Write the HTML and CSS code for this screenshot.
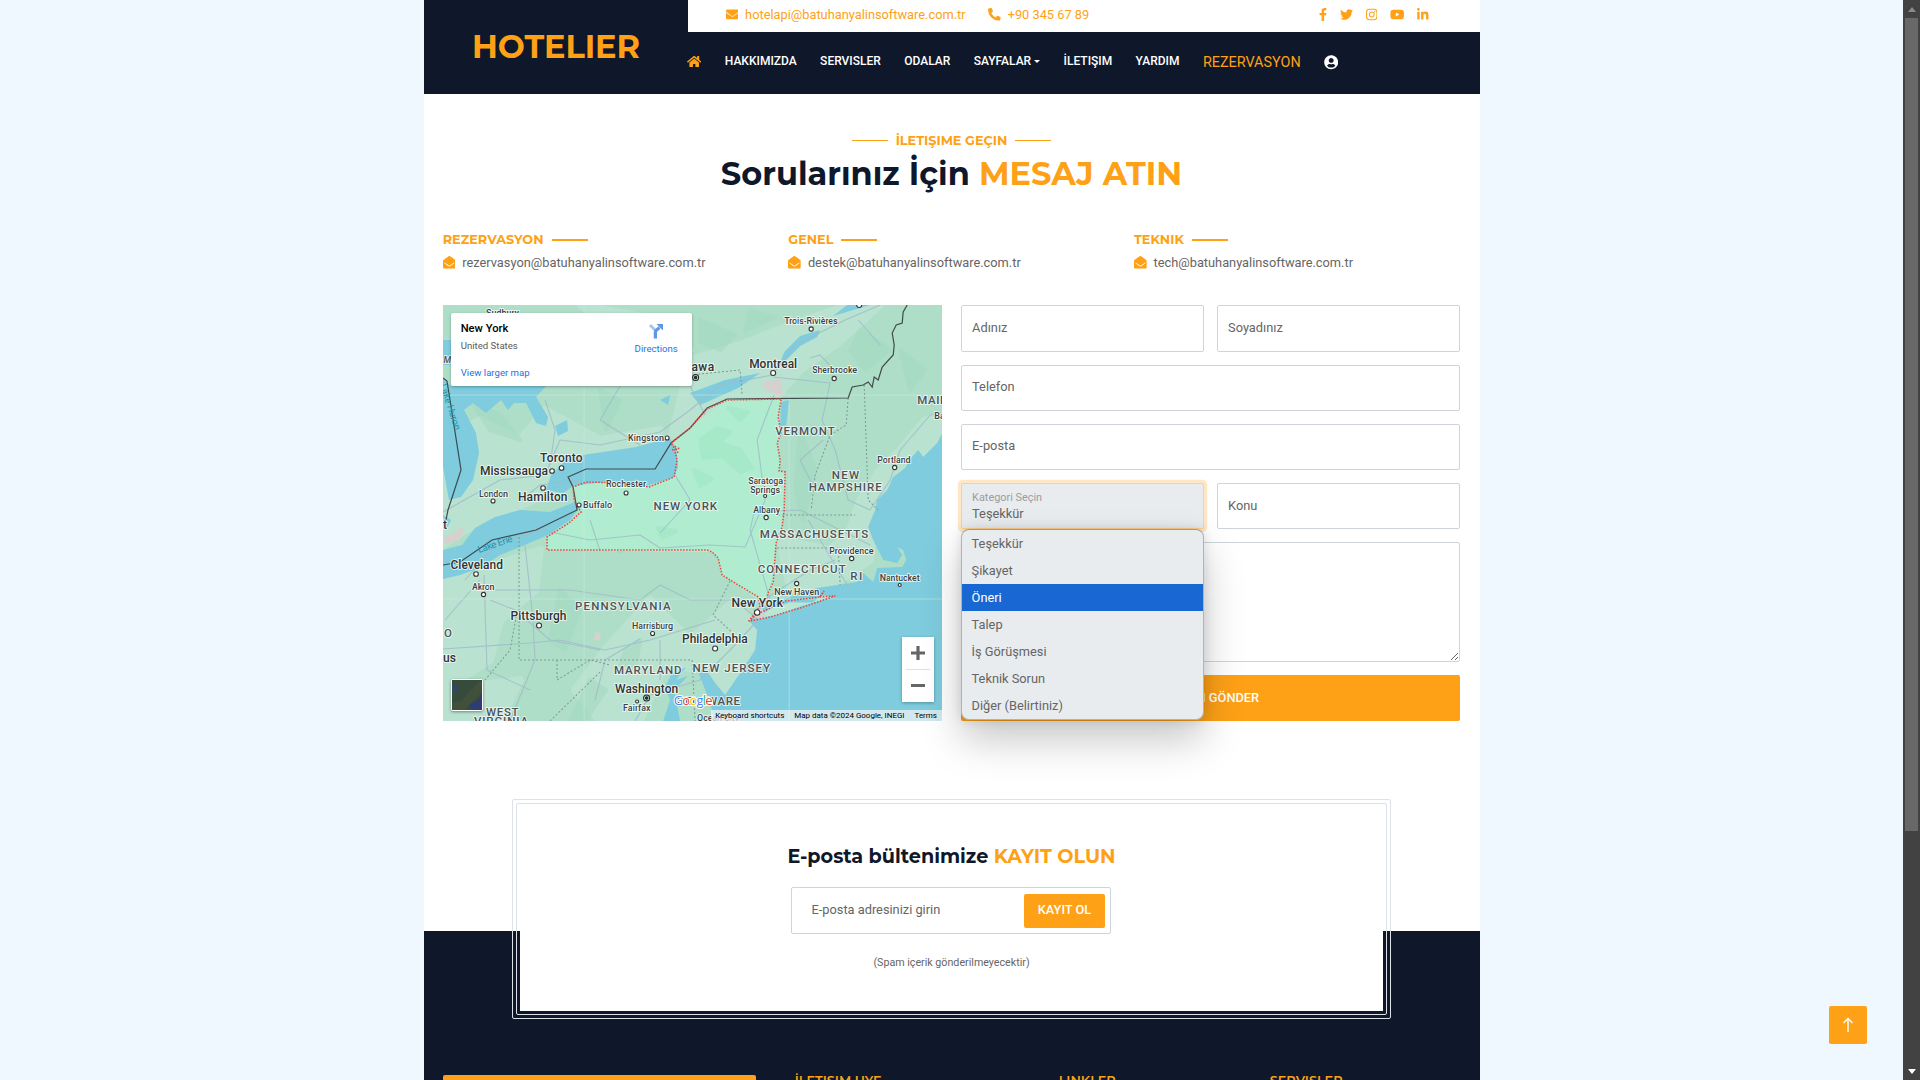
FILE: index.html
```html
<!DOCTYPE html>
<html lang="tr">
<head>
<meta charset="utf-8">
<title>Hotelier - İletişim</title>
<link rel="stylesheet" href="styles.css">
</head>
<body>
<svg class="sprite" width="0" height="0" aria-hidden="true">
  <symbol id="envelope" viewBox="0 0 512 512"><path d="M502.3 190.8c3.9-3.1 9.7-.2 9.7 4.7V400c0 26.5-21.5 48-48 48H48c-26.5 0-48-21.5-48-48V195.6c0-5 5.7-7.8 9.7-4.7 22.4 17.4 52.1 39.5 154.1 113.6 21.1 15.4 56.7 47.8 92.2 47.6 35.7.3 72-32.8 92.3-47.6 102-74.1 131.6-96.3 154-113.7zM256 320c23.2.4 56.6-29.2 73.4-41.4 132.7-96.3 142.8-104.7 173.4-128.7 5.8-4.5 9.2-11.5 9.2-18.9v-19c0-26.5-21.5-48-48-48H48c-26.5 0-48 21.5-48 48v19c0 7.4 3.4 14.3 9.2 18.9 30.6 23.9 40.7 32.4 173.4 128.7 16.8 12.2 50.2 41.8 73.4 41.4z"/></symbol>
  <symbol id="phone" viewBox="0 0 512 512"><path d="M497.39 361.8l-112-48a24 24 0 0 0-28 6.9l-49.6 60.6A370.66 370.66 0 0 1 130.6 204.11l60.6-49.6a23.94 23.94 0 0 0 6.9-28l-48-112A24.16 24.16 0 0 0 122.6.61l-104 24A24 24 0 0 0 0 48c0 256.5 207.9 464 464 464a24 24 0 0 0 23.4-18.6l24-104a24.29 24.29 0 0 0-14.01-27.6z"/></symbol>
  <symbol id="open" viewBox="0 0 512 512"><path d="M512 464c0 26.51-21.49 48-48 48H48c-26.51 0-48-21.49-48-48V200.724a48 48 0 0 1 18.387-37.776c24.913-19.529 45.501-35.365 164.2-121.511C199.412 29.17 232.797-.347 256 .003c23.198-.354 56.596 29.172 73.413 41.433 118.687 86.137 139.303 101.995 164.2 121.512A48 48 0 0 1 512 200.724V464zm-65.666-196.605c-2.563-3.728-7.7-4.595-11.339-1.907-22.845 16.873-55.462 40.705-105.582 77.079-16.825 12.266-50.21 41.781-73.413 41.43-23.211.344-56.559-29.143-73.413-41.43-50.114-36.37-82.734-60.204-105.582-77.079-3.639-2.688-8.776-1.821-11.339 1.907l-9.072 13.196a7.998 7.998 0 0 0 1.839 10.967c22.887 16.899 55.454 40.69 105.303 76.868 20.274 14.781 56.524 47.813 92.264 47.573 35.724.242 71.961-32.771 92.263-47.573 49.85-36.179 82.418-59.97 105.303-76.868a7.998 7.998 0 0 0 1.839-10.967l-9.071-13.196z"/></symbol>
</svg>
<div class="window">
<div class="viewport">
<div class="page">
  <header class="header">
    <div class="brand">HOTELIER</div>
    <div class="head-right">
      <div class="topbar">
        <div class="contact-line">
          <span class="with-icon"><svg class="ico"><use href="#envelope"/></svg><span class="mail">hotelapi@batuhanyalinsoftware.com.tr</span></span>
          <span class="with-icon"><svg class="ico"><use href="#phone"/></svg>+90 345 67 89</span>
        </div>
        <div class="social">
          <svg width="8" height="13" viewBox="0 0 320 512"><path d="M279.14 288l14.22-92.66h-88.91v-60.13c0-25.35 12.42-50.06 52.24-50.06h40.42V6.26S260.43 0 225.36 0c-73.22 0-121.08 44.38-121.08 124.72v70.62H22.89V288h81.39v224h100.17V288z"/></svg>
          <svg width="13" height="13" viewBox="0 0 512 512"><path d="M459.37 151.716c.325 4.548.325 9.097.325 13.645 0 138.72-105.583 298.558-298.558 298.558-59.452 0-114.68-17.219-161.137-47.106 8.447.974 16.568 1.299 25.34 1.299 49.055 0 94.213-16.568 130.274-44.832-46.132-.975-84.792-31.188-98.112-72.772 6.498.974 12.995 1.624 19.818 1.624 9.421 0 18.843-1.3 27.614-3.573-48.081-9.747-84.143-51.98-84.143-102.985v-1.299c13.969 7.797 30.214 12.67 47.431 13.319-28.264-18.843-46.781-51.005-46.781-87.391 0-19.492 5.197-37.36 14.294-52.954 51.655 63.675 129.3 105.258 216.365 109.807-1.624-7.797-2.599-15.918-2.599-24.04 0-57.828 46.782-104.934 104.934-104.934 30.213 0 57.502 12.67 76.67 33.137 23.715-4.548 46.456-13.32 66.599-25.34-7.798 24.366-24.366 44.833-46.132 57.827 21.117-2.273 41.584-8.122 60.426-16.243-14.292 20.791-32.161 39.308-52.628 54.253z"/></svg>
          <svg width="11.5" height="13" viewBox="0 0 448 512"><path fill-rule="evenodd" d="M132 32h184a132 132 0 0 1 132 132v184a132 132 0 0 1-132 132H132A132 132 0 0 1 0 348V164A132 132 0 0 1 132 32zm0 40a92 92 0 0 0-92 92v184a92 92 0 0 0 92 92h184a92 92 0 0 0 92-92V164a92 92 0 0 0-92-92zm92 69a115 115 0 1 1 0 230 115 115 0 0 1 0-230zm0 40a75 75 0 1 0 0 150 75 75 0 0 0 0-150zm119-72a27 27 0 1 1 0 54 27 27 0 0 1 0-54z"/></svg>
          <svg width="14.4" height="13" viewBox="0 0 576 512"><path d="M549.655 124.083c-6.281-23.65-24.787-42.276-48.284-48.597C458.781 64 288 64 288 64S117.22 64 74.629 75.486c-23.497 6.322-42.003 24.947-48.284 48.597-11.412 42.867-11.412 132.305-11.412 132.305s0 89.438 11.412 132.305c6.281 23.65 24.787 41.5 48.284 47.821C117.22 448 288 448 288 448s170.78 0 213.371-11.486c23.497-6.321 42.003-24.171 48.284-47.821 11.412-42.867 11.412-132.305 11.412-132.305s0-89.438-11.412-132.305zm-317.51 213.508V175.185l142.739 81.205-142.739 81.201z"/></svg>
          <svg width="11.5" height="13" viewBox="0 0 448 512"><path d="M100.28 448H7.4V148.9h92.88zM53.79 108.1C24.09 108.1 0 83.5 0 53.8a53.79 53.79 0 0 1 107.58 0c0 29.7-24.1 54.3-53.79 54.3zM447.9 448h-92.68V302.4c0-34.7-.7-79.2-48.29-79.2-48.29 0-55.69 37.7-55.69 76.7V448h-92.78V148.9h89.08v40.8h1.3c12.4-23.5 42.69-48.3 87.88-48.3 94 0 111.28 61.9 111.28 142.3V448z"/></svg>
        </div>
      </div>
      <nav class="nav">
        <svg class="home" width="14.4" height="13" viewBox="0 0 576 512"><path d="M280.37 148.26L96 300.11V464a16 16 0 0 0 16 16l112.06-.29a16 16 0 0 0 15.92-16V368a16 16 0 0 1 16-16h64a16 16 0 0 1 16 16v95.64a16 16 0 0 0 16 16.05L464 480a16 16 0 0 0 16-16V300L295.67 148.26a12.19 12.19 0 0 0-15.3 0zM571.6 251.47L488 182.56V44.05a12 12 0 0 0-12-12h-56a12 12 0 0 0-12 12v72.61L318.47 43a48 48 0 0 0-61 0L4.34 251.47a12 12 0 0 0-1.6 16.9l25.5 31A12 12 0 0 0 45.15 301l235.22-193.74a12.19 12.19 0 0 1 15.3 0L530.9 301a12 12 0 0 0 16.9-1.6l25.5-31a12 12 0 0 0-1.7-16.93z"/></svg>
        <a>HAKKIMIZDA</a><a>SERVISLER</a><a>ODALAR</a><a class="drop">SAYFALAR</a><a>İLETIŞIM</a><a>YARDIM</a><a class="reserve">REZERVASYON</a>
        <svg class="user" width="14.4" height="14.4" viewBox="0 0 496 512"><path d="M248 8C111 8 0 119 0 256s111 248 248 248 248-111 248-248S385 8 248 8zm0 96c48.6 0 88 39.4 88 88s-39.4 88-88 88-88-39.4-88-88 39.4-88 88-88zm0 344c-58.7 0-111.3-26.6-146.5-68.2 18.8-35.4 55.6-59.8 98.5-59.8 2.4 0 4.8.4 7.1 1.1 13 4.2 26.6 6.9 40.9 6.9 14.3 0 28-2.7 40.9-6.9 2.3-.7 4.7-1.1 7.1-1.1 42.9 0 79.7 24.4 98.5 59.8C359.3 421.4 306.7 448 248 448z"/></svg>
      </nav>
    </div>
  </header>

  <main class="main">
    <div class="overline"><i></i><span>İLETIŞIME GEÇIN</span><i></i></div>
    <h1 class="title">Sorularınız İçin <b>MESAJ ATIN</b></h1>

    <div class="contacts">
      <div><h6><span>REZERVASYON</span></h6><p><svg class="ico"><use href="#open"/></svg>rezervasyon@batuhanyalinsoftware.com.tr</p></div>
      <div><h6><span>GENEL</span></h6><p><svg class="ico"><use href="#open"/></svg>destek@batuhanyalinsoftware.com.tr</p></div>
      <div><h6><span>TEKNIK</span></h6><p><svg class="ico"><use href="#open"/></svg>tech@batuhanyalinsoftware.com.tr</p></div>
    </div>

    <div class="columns">
      <div class="map">
        <svg class="map-art" viewBox="443 305 499 416" preserveAspectRatio="none">
          <rect x="443" y="305" width="499" height="416" fill="#aedec8"/>
          <g class="light">
            <path d="M443 440L480 420 520 440 545 410 600 440 660 430 640 450 570 455 548 475 545 495 510 510 465 530 443 545z"/>
            <path d="M443 580L480 570 540 550 535 590 500 620 490 660 443 690z"/>
            <path d="M690 360L740 345 790 325 850 305 880 305 835 345 800 370 775 398 725 400 690 430 672 435z"/>
            <path d="M605 650L650 600 690 640 735 600 757 625 750 665 725 692 705 670 665 665 640 721 600 721 575 690z"/>
            <path d="M443 690L520 680 500 721H443zM580 305L640 340 690 350 660 320z"/>
            <path d="M860 500L880 470 900 450 925 420 942 415V440L900 470 875 510 870 560 840 580 790 590 780 540 830 550 850 530z"/>
          </g>
          <g class="dark">
            <path d="M470 400L490 430 520 440 500 415zM600 320L640 350 610 365zM700 320L735 335 720 350 700 342zM750 310L775 318 745 330zM800 430L815 470 803 520 795 490zM860 330L890 350 865 370 850 350zM600 390L620 400 606 430z"/>
            <path d="M600 530L640 540 620 552zM560 590L580 610 565 650 550 640zM625 650L640 640 636 665 620 665zM590 680L570 721H585L606 690zM690 540L710 520 705 545zM900 350L925 370 910 390z"/>
          </g>
          <path fill="#b0edd0" d="M690 428L727 399H781L778 417 781 433 777 443 780 460 779 471 785 472 784 510 782 527 776 543 773 582 768 597 758 600 730 580 722 575 718 558 712 552 547 550V537L569 523 581 512 574 500 573 487 586 482 623 483 649 487 674 477 677 460 671 443z"/>
          <path class="hills" d="M700 440L716 428 730 432 720 443 740 450 752 468 740 472 722 456 703 458zM728 408L748 412 740 420zM694 470L712 479 700 486zM658 528L676 531 662 538z"/>
          <g fill="#7eccde">
            <path d="M942 433L937 443 923 457 918 450 910 459 905 468 893 477 887 490 877 500 875 510 868 527 873 540 878 550 883 560 897 563 902 555 897 547 903 550 906 560 902 567 877 568 873 582 863 573 857 582 837 585 817 588 790 597 768 604 755 610 750 622 757 630 755 650 740 673 725 695 715 683 705 668 698 672 708 697 715 721H942z"/>
            <path d="M546 490L551 475 569 457 603 452 636 447 669 438 676 447 678 467 674 477 649 485 623 482 596 483 573 486 563 493z"/>
            <path d="M443 378L451 386 489 385 546 386 536 397 548 417 546 426 536 423 526 403 514 403 508 410 501 400 486 413 473 403 464 410 476 433 479 453 473 480 461 497 449 500 443 467z"/>
            <path d="M443 340H452V365H443zM443 550L462 545 475 528 495 517 520 510 550 512 575 502 579 508 570 520 548 535 520 547 500 555 480 568 460 575 443 579z"/>
            <path d="M443 515L451 520 446 530zM686 667L676 680 688 676 674 690 680 721H663L670 700 665 687 671 675zM555 426L567 420 568 431 558 436zM781 402L789 400 786 425 780 428zM820 330L800 336 784 352 779 366 784 362 800 346 817 337zM690 393L725 380 760 373 738 388 700 405zM847 305H870L833 316zM635 320L642 325 638 334zM660 400L670 395 668 405z"/>
          </g>
          <path fill="#b8e8d3" stroke="#82cedd" d="M755 619L770 608 790 602 813 602 820 595 835 597 800 607 775 616z"/>
          <g fill="#d7d0ce"><path d="M764 381L781 380 783 397 775 394 763 388zM595 632L601 633 599 641 594 640zM444 538L464 527 460 540 445 544zM752 612L762 608 766 618 754 619z"/></g>
          <g fill="none" stroke="#9fbcc9" stroke-opacity=".85" stroke-width="1.1" stroke-linejoin="round">
            <path d="M443 512L500 480 545 475 560 440 600 445 660 432 690 410 720 385 772 375 795 345 845 320 880 305M520 501L540 485 580 480M550 465L555 430 545 400M620 386L600 420 640 445M773 377L830 383 822 420 835 450 848 500 870 510M690 386L705 415M834 370L820 355 810 358M858 320L880 345"/>
            <path d="M465 580L495 545 540 530 590 540 640 535 660 548 710 545 745 547 765 500 757 440 774 395M490 590L570 590 640 600 660 585 690 600 735 600 758 620 730 650 700 680 650 695 635 721M443 649L530 643 560 640 605 650 650 640 715 620M533 620L525 545M533 622L535 660 510 721M484 575L487 670 530 690M490 600L515 610 550 640 600 650M640 639L605 660 595 700M445 620L480 580M770 600L750 530 754 512 800 510 850 535 870 545M760 602L810 570 835 560M808 520L850 590M870 510L890 480 900 450 930 415 942 412M823 440L800 460 815 490M660 640V680M660 533L690 500 675 475M600 551L590 520"/>
          </g>
          <g fill="none" stroke="#7b9b93" stroke-dasharray="2 2"><path d="M519 537V660H692M848 398L846 425 830 435 815 475 811 510M864 385L868 500 878 510M778 515L855 515M777 548L838 548M838 548L840 585M557 660V680L590 660 610 665M730 581L713 615 735 635M517 612L510 650 485 680M692 660L695 721M550 721L600 672M690 375L740 370 742 395"/></g>
          <path fill="none" stroke="#c9e9e3" stroke-opacity=".55" d="M443 395H942M584 305V721M789 395V721M443 599H942"/>
          <path class="border" d="M443 378L447 381 461 470 448 510 446 520M443 565L460 562 492 540 536 530 577 510 573 487 568 477 586 469 655 469 671 443 690 428 707 408 727 399 848 398 852 387 863 385 868 382 872 387 874 377 878 380 882 367 893 355 894 345 892 333 896 325 902 323 903 312 907 305"/>
          <path class="state" d="M690 428L707 409 727 400 781 399 778 417 781 433 777 443 780 460 779 471 785 472 784 510 782 527 776 543 773 582 768 593 765 603M758 597L730 580 722 575 718 558 712 552 707 550 547 550V537L569 523 581 512 574 500 573 487 586 482 623 483 649 487 674 477 677 460 674 448 671 443 690 428M758 597L760 606 748 622 757 614 786 601 820 597 824 591 819 597 835 596 800 608 770 617 750 621M672 450L680 448M675 446L678 453"/>
          <g class="dots"><circle cx="552" cy="471" r="2.3"/><circle cx="561.500" cy="468" r="2.300"/><circle cx="543" cy="488" r="2.300"/><circle cx="493" cy="501" r="2"/><circle cx="667" cy="438" r="2"/><circle cx="626" cy="493" r="2"/><circle cx="579" cy="505" r="2"/><circle cx="811" cy="329" r="2.100"/><circle cx="773" cy="373" r="2.500"/><circle cx="834" cy="378.500" r="2.100"/><circle cx="894.500" cy="467.500" r="2.100"/><circle cx="765" cy="496" r="1.500"/><circle cx="766" cy="517.500" r="2.100"/><circle cx="851.500" cy="558.500" r="2.100"/><circle cx="899.500" cy="585" r="1.500"/><circle cx="796.500" cy="583.500" r="2.100"/><circle cx="757" cy="612.500" r="2.700"/><circle cx="715" cy="648.500" r="2.500"/><circle cx="476" cy="574" r="2.300"/><circle cx="483.500" cy="594.500" r="2.100"/><circle cx="539" cy="625.500" r="2.500"/><circle cx="652.500" cy="633.500" r="2"/><circle cx="637" cy="701.500" r="1.500"/><circle cx="859" cy="305" r="2.500"/></g>
          <g fill="#333" stroke="#222"><circle cx="695.500" cy="377.500" r="1.200"/><circle cx="646.500" cy="698" r="1.200"/><g fill="none"><circle cx="695.500" cy="377.500" r="3"/><circle cx="646.500" cy="698" r="3"/></g></g>
          <g class="small"><text x="486" y="316" textLength="33">Sudbury</text><text x="479" y="497" textLength="29">London</text><text x="628" y="441" textLength="36">Kingston</text><text x="606" y="487.500" textLength="40">Rochester</text><text x="583" y="508.500" textLength="29">Buffalo</text><text x="784" y="324.500" textLength="53.500">Trois-Rivières</text><text x="812" y="373.500" textLength="45">Sherbrooke</text><text x="934" y="419">Bangor</text><text x="877" y="463.500" textLength="33.500">Portland</text><text x="748" y="484" textLength="35">Saratoga</text><text x="750" y="493" textLength="30">Springs</text><text x="753" y="513" textLength="27">Albany</text><text x="829" y="554" textLength="44.500">Providence</text><text x="879.500" y="581" textLength="40">Nantucket</text><text x="774" y="595" textLength="45">New Haven</text><text x="472" y="590" textLength="22.500">Akron</text><text x="632" y="629" textLength="41">Harrisburg</text><text x="623" y="711" textLength="27.500">Fairfax</text><text x="697" y="721" textLength="42">Ocean City</text></g>
          <g class="city"><text x="540" y="462" textLength="42.500">Toronto</text><text x="480" y="475.500" textLength="68">Mississauga</text><text x="518" y="501.500" textLength="49.500">Hamilton</text><text x="674" y="371.500" textLength="40">Ottawa</text><text x="749" y="368" textLength="48">Montreal</text><text x="731.500" y="607.500" textLength="51.500">New York</text><text x="682" y="643.500" textLength="65.500">Philadelphia</text><text x="450.500" y="569.500" textLength="52.500">Cleveland</text><text x="510.500" y="620.500" textLength="56">Pittsburgh</text><text x="615" y="693" textLength="63">Washington</text><text x="443" y="662.500">us</text><text x="443" y="529">t</text></g>
          <g class="region"><text x="653.500" y="510" textLength="63.500">NEW YORK</text><text x="775" y="435" textLength="59.500">VERMONT</text><text x="917" y="404" textLength="38">MAINE</text><text x="831.500" y="479.500" textLength="27.500">NEW</text><text x="808.500" y="491" textLength="73">HAMPSHIRE</text><text x="759.500" y="538.500" textLength="108.500">MASSACHUSETTS</text><text x="757.500" y="573.500" textLength="88">CONNECTICUT</text><text x="850" y="580.500" textLength="12">RI</text><text x="692.500" y="672.500" textLength="77.500">NEW JERSEY</text><text x="677" y="705.500" textLength="63">DELAWARE</text><text x="575" y="610.500" textLength="95.500">PENNSYLVANIA</text><text x="614" y="674.500" textLength="67.500">MARYLAND</text><text x="444" y="637">O</text><text x="486" y="716" textLength="32.500">WEST</text><text x="474" y="725" textLength="54">VIRGINIA</text><text x="443.500" y="363" font-style="italic" font-size="9">M</text></g>
          <g class="lake"><text transform="translate(479 553) rotate(-19)" textLength="36">Lake Erie</text><text transform="translate(440 385) rotate(72)" textLength="48">Lake Huron</text></g>
        </svg>
        <div class="map-card"><div><b>New York</b><span>United States</span><a>View larger map</a></div>
          <div class="directions"><svg width="16" height="16" viewBox="0 0 16 16"><path d="M2 2l5 5M7 15V9" fill="none" stroke="#a8c6f5" stroke-width="3"/><path d="M7.500 15.500V8l4-3.500" fill="none" stroke="#5e96e8" stroke-width="3"/><path d="M8.500 1H15v6.500z" fill="#5e96e8"/></svg><a>Directions</a></div></div>
        <div class="thumb"><svg width="30" height="30" viewBox="0 0 29 29"><rect width="29" height="29" fill="#374b3c"/><path d="M0 29V22l9-2 8-9 9-9h3v10l-10 10-7 7z" fill="#40503a"/><path d="M29 12l-3 7-6 3-4 3 4 4h9z" fill="#2d3d73"/><path d="M0 6l4-2 2 5-5 4z" fill="#32466d"/></svg></div>
        <div class="zoom"><svg width="32" height="65" viewBox="0 0 32 65"><path d="M9 16h14M16 9v14M9 48.500h14" stroke="#666" stroke-width="3.200"/><path d="M4 32.500h24" stroke="#e0e0e0"/></svg></div>
        <div class="google"><i class="b">G</i><i class="r">o</i><i class="y">o</i><i class="b">g</i><i class="g">l</i><i class="r">e</i></div>
        <div class="legal"><span>Keyboard shortcuts</span><span>Map data ©2024 Google, INEGI</span><span>Terms</span></div>
      </div>

      <form class="form">
        <input placeholder="Adınız"><input placeholder="Soyadınız">
        <input class="wide" placeholder="Telefon">
        <input class="wide" placeholder="E-posta">
        <div class="select"><small>Kategori Seçin</small><span>Teşekkür</span>
          <ul class="options"><li>Teşekkür</li><li>Şikayet</li><li class="on">Öneri</li><li>Talep</li><li>İş Görüşmesi</li><li>Teknik Sorun</li><li>Diğer (Belirtiniz)</li></ul>
        </div>
        <input placeholder="Konu">
        <textarea class="wide"></textarea>
        <button class="wide send" type="button">MESAJI GÖNDER</button>
      </form>
    </div>
  </main>

  <section class="newsletter"><div class="frame"><div class="panel">
    <h4>E-posta bültenimize <b>KAYIT OLUN</b></h4>
    <div class="signup"><span>E-posta adresinizi girin</span><button type="button">KAYIT OL</button></div>
    <p>(Spam içerik gönderilmeyecektir)</p>
  </div></div></section>

  <footer class="footer">
    <div class="promo"></div>
    <h6>İLETIŞIM UYE</h6><h6>LINKLER</h6><h6>SERVISLER</h6>
  </footer>
</div>
</div>
<div class="scrollbar"><i class="up"></i><div class="thumbbar"></div><i class="down"></i></div>
</div>
<div class="to-top"><svg width="12" height="16" viewBox="0 0 12 16"><path d="M6 15V2M1.500 6L6 1.500 10.500 6" fill="none" stroke="#fff" stroke-width="1.400"/></svg></div>
</body>
</html>
```
FILE: styles.css
```css
* { box-sizing: border-box; }
html, body { margin: 0; height: 1080px; overflow: hidden; }
body { background: #f0f8ff; font: 400 12.8px/19.2px Roboto, sans-serif; color: #666565; }
h1, h4, h6, p, ul { margin: 0; padding: 0; }
.sprite { position: absolute; }
svg { display: block; flex: none; }
.window { display: flex; height: 1080px; }
.viewport { flex: 1; overflow: hidden; }
.page { width: 1056px; height: 1080px; margin: 0 auto; background: #fff; overflow: hidden; }
.ico { width: 12.8px; height: 12.8px; fill: #fea116; }

.header { display: grid; grid-template-columns: 264px 1fr; height: 94px; background: #0f172b; }
.brand { display: flex; align-items: center; justify-content: center; font: 700 32px/1 Montserrat, Inter, sans-serif; letter-spacing: -.1px; padding-left: 1px; color: #fea116; }
.topbar { display: flex; justify-content: space-between; align-items: center; height: 32px; padding: 0 51px 3px 38px; background: #fff; color: #fea116; }
.contact-line { display: flex; gap: 22.500px; }
.with-icon { display: flex; align-items: center; gap: 6.800px; }
.social { display: flex; gap: 12.800px; align-items: center; fill: #fea116; }
.nav { display: flex; align-items: center; height: 62px; padding-bottom: 3px; gap: 23.400px; font-size: 12px; font-weight: 500; color: #fff; }
.home { fill: #fea116; margin-left: -.5px; margin-top: -1px; }
.user { fill: #fff; margin-top: 2px; }
.drop { display: flex; align-items: center; gap: 3px; }
.drop::after { content: ""; border: 3.200px solid transparent; border-top-color: #fff; border-bottom: 0; }
.reserve { color: #fea116; font-size: 14.400px; font-weight: 400; margin-top: 3px; }

.main { padding: 38px 19.200px 0; }
.overline { display: flex; justify-content: center; align-items: center; gap: 8px; height: 17px; font: 700 12.800px/17px Montserrat, Inter, sans-serif; color: #fea116; }
.overline i { width: 36px; height: 1px; background: #fea116; }
.title { margin-top: 6px; text-align: center; font: 700 32px/38px Montserrat, Inter, sans-serif; color: #0f172b; white-space: nowrap; }
b { font-weight: inherit; }
.title b, .panel b { color: #fea116; }
.contacts { display: grid; grid-template-columns: repeat(3, 1fr); gap: 19.200px; margin-top: 39px; }
.contacts h6 { display: flex; align-items: center; gap: 8px; height: 15px; font: 700 12.800px/15px Montserrat, Inter, sans-serif; color: #fea116; }
.contacts h6::after { content: ""; width: 36px; height: 2px; background: #fea116; }
.contacts p { display: flex; align-items: center; gap: 6.800px; height: 17px; margin-top: 7px; }

.columns { display: grid; grid-template-columns: 1fr 1fr; gap: 19.200px; margin-top: 34.400px; }
.map { position: relative; height: 416px; overflow: hidden; }
.map-art { width: 100%; height: 100%; }
.light { fill: #bce3d2; stroke: #bce3d2; stroke-width: 8; stroke-linejoin: round; opacity: .85; }
.dark { fill: #9fd9bd; stroke: #9fd9bd; stroke-width: 4; stroke-linejoin: round; opacity: .45; }
.hills { fill: #9fe7c4; stroke: #9fe7c4; stroke-width: 4; stroke-linejoin: round; opacity: .6; }
.map-art text { paint-order: stroke; stroke: #f3faf7; stroke-width: 2px; stroke-linejoin: round; stroke-opacity: .8; }
.border { fill: none; stroke: #3f4a4b; stroke-width: 1.200; }
.state { fill: none; stroke: #e8453c; stroke-width: 1.500; stroke-dasharray: 1.500 1.500; }
.dots { fill: #fff; stroke: #333; stroke-width: 1.100; }
.small { font-size: 9px; font-weight: 500; fill: #3c4043; }
.city { font-size: 12px; font-weight: 500; fill: #2f3335; }
.region { font-size: 11.500px; font-weight: 500; fill: #4c5357; }
.map-art .lake text { font-size: 9.500px; fill: #2492a4; stroke: none; }
.map-card { position: absolute; left: 8px; top: 8px; width: 241px; height: 73px; padding: 9px 14px 0 10px; display: flex; justify-content: space-between; background: #fff; border-radius: 2px; box-shadow: 0 1px 3px rgba(0,0,0,.3); font-size: 9.600px; line-height: 13px; color: #5b5b5b; }
.map-card b { display: block; font-size: 11.200px; font-weight: 500; line-height: 14px; color: #000; }
.map-card span { display: block; margin: 3px 0 14px; }
.map-card a { color: #1a73e8; }
.directions { display: flex; flex-direction: column; align-items: center; padding-top: 1px; gap: 3px; }
.thumb { position: absolute; left: 8px; top: 374px; padding: 1px; background: #fff; border-radius: 2px; box-shadow: 0 1px 3px rgba(0,0,0,.4); }
.zoom { position: absolute; left: 459px; top: 332px; background: #fff; box-shadow: 0 1px 3px rgba(0,0,0,.3); }
.google { position: absolute; left: 231px; top: 387px; font: 500 13px/16px "Open Sans", sans-serif; letter-spacing: -.8px; -webkit-text-stroke: 2px #fff; paint-order: stroke; }
.google i { font-style: normal; }
.b { color: #4285f4; } .r { color: #ea4335; } .y { color: #fbbc05; } .g { color: #34a853; }
.legal { position: absolute; right: 0; bottom: 0; display: flex; gap: 10px; height: 11px; padding: 0 5px 0 4px; background: rgba(245,245,245,.7); font-size: 8px; letter-spacing: -.02px; line-height: 11px; color: #000; white-space: nowrap; }

.form { display: grid; grid-template-columns: 1fr 1fr; grid-template-rows: repeat(4, 46.400px) 120px 46.400px; gap: 12.800px; margin: 0; }
.wide { grid-column: 1 / -1; }
.form input, .form textarea, .select { min-width: 0; width: 100%; height: 100%; margin: 0; border: 1px solid #ced4da; border-radius: 2px; background: #fff; padding: 0 10px 2px; font: 400 12.800px/19.200px Roboto, sans-serif; color: #666565; outline: 0; }
.form input::placeholder { color: #666565; opacity: 1; }
.form .select { position: relative; padding-top: 6px; background: #e8ecef; border-color: #fed08b; box-shadow: 0 0 0 3.200px rgba(254,161,22,.25); line-height: 16px; }
.select small { display: block; font-size: 10.880px; line-height: 15px; color: #9b9c9d; }
.select > span { display: block; line-height: 18px; }
.options { position: absolute; z-index: 2; left: -1px; top: 45px; width: 243px; list-style: none; background: #e8ecef; border: 1px solid #b0b4b8; border-top-color: #9a9a9a; border-radius: 8px; overflow: hidden; box-shadow: 0 20px 40px rgba(0,0,0,.22), 0 0 12px rgba(0,0,0,.12); }
.options li { height: 27px; padding-left: 9.500px; line-height: 27px; }
.options .on { background: #1967d2; color: #fff; }
.send { border: 0; border-radius: 2px; background: #fea116; color: #fff; font: 500 12.800px/19px Roboto, sans-serif; padding: 0 2px 2px 0; }

.newsletter { position: relative; z-index: 1; width: 879px; margin: 78px auto 0; }
.frame { display: flex; border: 1px solid #dee2e6; border-radius: 2px; padding: 3px; height: 220px; }
.panel { flex: 1; border: 1px solid #dee2e6; border-radius: 2px; padding: 3px; background: #fff content-box; text-align: center; }
.panel h4 { padding-top: 37px; font: 700 19.200px/24px Montserrat, Inter, sans-serif; color: #0f172b; }
.signup { position: relative; left: -.5px; display: flex; align-items: center; justify-content: space-between; width: 320px; height: 47px; margin: 19px auto 0; padding: 0 5px 0 19.500px; border: 1px solid #ced4da; border-radius: 2px; }
.signup span { padding-bottom: 2px; }
.signup button { width: 81px; height: 34px; border: 0; border-radius: 2px; background: #fea116; color: #fff; font: 500 12.800px/32px Roboto, sans-serif; padding: 0 0 2px; }
.panel p { margin-top: 19px; font-size: 10.700px; }
.footer { display: grid; grid-template-columns: 352px 264px 211px 1fr; margin-top: -88px; height: 160px; padding: 140px 19.200px 0; background: #0f172b; }
.promo { width: 313px; height: 16px; margin-top: 4px; border-radius: 2px 2px 0 0; background: #fea116; }
.footer h6 { font: 600 12.800px/16px Montserrat, Inter, sans-serif; color: #fea116; padding-top: 2px; white-space: nowrap; }

.scrollbar { width: 17px; display: flex; flex-direction: column; align-items: center; background: #424242; }
.thumbbar { width: 13px; height: 813px; margin: 6px 0 auto; background: #686868; }
.up, .down { border: 4px solid transparent; }
.up { margin-top: 7px; border-top: 0; border-bottom: 5px solid #8a8a8a; }
.down { margin-bottom: 6px; border-bottom: 0; border-top: 5px solid #fff; }
.to-top { position: fixed; left: 1829px; top: 1006px; width: 38px; height: 38px; display: grid; place-items: center; border-radius: 2px; background: #fea116; }
```
